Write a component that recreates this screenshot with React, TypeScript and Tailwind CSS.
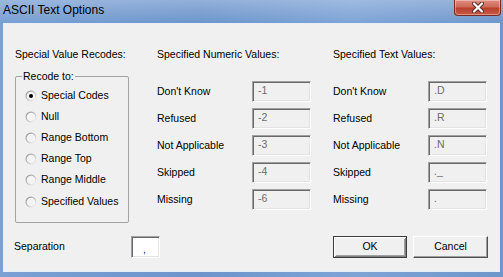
import React from 'react';

const font = { fontFamily: '"Liberation Sans", Arial, sans-serif' };

const recodes = ['Special Codes', 'Null', 'Range Bottom', 'Range Top', 'Range Middle', 'Specified Values'];
const numeric = [
  { label: "Don't Know", value: '-1' },
  { label: 'Refused', value: '-2' },
  { label: 'Not Applicable', value: '-3' },
  { label: 'Skipped', value: '-4' },
  { label: 'Missing', value: '-6' },
];
const text = [
  { label: "Don't Know", value: '.D' },
  { label: 'Refused', value: '.R' },
  { label: 'Not Applicable', value: '.N' },
  { label: 'Skipped', value: '._' },
  { label: 'Missing', value: '.' },
];

const Radio = ({ checked }: { checked?: boolean }) => (
  <svg width="12" height="12" viewBox="0 0 12 12" className="shrink-0">
    <defs>
      <linearGradient id="rb" x1="0" y1="0" x2="1" y2="1">
        <stop offset="0" stopColor="#8a8a8a" />
        <stop offset="0.55" stopColor="#c8c8c8" />
        <stop offset="1" stopColor="#ffffff" />
      </linearGradient>
    </defs>
    <circle cx="6" cy="6" r="5.5" fill="url(#rb)" />
    <circle cx="6" cy="6" r="4.3" fill="#f4f4f4" />
    {checked && <circle cx="6" cy="6" r="2" fill="#000" />}
  </svg>
);

const Field = ({ value }: { value: string }) => (
  <div className="w-[59px] h-[21px] flex items-center pl-[5px] pb-[2px] text-[#6d6d6d] bg-[#f0f0f0] border border-t-[#a0a0a0] border-l-[#a0a0a0] border-r-white border-b-white shadow-[inset_1px_1px_0_#696969,inset_-1px_-1px_0_#e3e3e3]">
    {value}
  </div>
);

const ValueColumn = ({ title, rows }: { title: string; rows: { label: string; value: string }[] }) => (
  <div className="flex flex-col">
    <div className="h-[14px] leading-[14px]">{title}</div>
    <div className="mt-[20px] flex flex-col gap-[6px]">
      {rows.map((r) => (
        <div key={r.label} className="flex items-center h-[21px]">
          <div className="w-[95px]">{r.label}</div>
          <Field value={r.value} />
        </div>
      ))}
    </div>
  </div>
);

export default function App() {
  return (
    <div
      className="w-[503px] h-[277px] flex flex-col overflow-hidden bg-[linear-gradient(90deg,#7aa0d4_0%,#6d95cc_40%,#7ea4d6_70%,#6f96cb_100%)] text-[10.5px] text-black"
      style={font}
    >
      {/* title bar */}
      <div className="h-[23px] flex justify-between shrink-0 bg-[linear-gradient(180deg,rgba(255,255,255,0.25)_0%,rgba(255,255,255,0)_100%)]">
        <div className="pl-[3px] pt-[3px] text-[12px] leading-[15px] text-black">ASCII Text Options</div>
        <div className="mr-[2px] w-[47px] h-[16px] rounded-b-[4px] border border-t-0 border-[#7a2a22] bg-[linear-gradient(180deg,#e08e80_0%,#cf6a5a_45%,#b8402f_55%,#c85a45_100%)] flex items-center justify-center shadow-[inset_0_0_0_1px_rgba(255,255,255,0.35)]">
          <svg width="14" height="11" viewBox="0 0 14 11">
            <path d="M3 1.5 L11 9.5 M11 1.5 L3 9.5" stroke="#5a2a24" strokeWidth="4" strokeLinecap="round" />
            <path d="M3 1.5 L11 9.5 M11 1.5 L3 9.5" stroke="#ffffff" strokeWidth="2.2" strokeLinecap="round" />
          </svg>
        </div>
      </div>

      {/* client area */}
      <div className="ml-[3px] mr-[3px] h-[249px] shrink-0 border border-[#e9eff7] bg-[#f0f0f0] flex flex-col pt-[23px] pl-[11px]">
        <div className="flex">
          {/* recodes */}
          <div className="w-[142px] flex flex-col">
            <div className="h-[14px] leading-[14px]">Special Value Recodes:</div>
            <fieldset className="mt-[8px] w-[114px] h-[154px] border border-[#a3a3a3] rounded-[2px] pl-[9px] pt-[2px]">
              <legend className="-ml-[3px] px-[1px] leading-[14px]">Recode to:</legend>
              {recodes.map((r, i) => (
                <div key={r} className="flex items-center gap-[4px] h-[21.2px]">
                  <Radio checked={i === 0} />
                  <span>{r}</span>
                </div>
              ))}
            </fieldset>
          </div>
          <div className="w-[176px]">
            <ValueColumn title="Specified Numeric Values:" rows={numeric} />
          </div>
          <ValueColumn title="Specified Text Values:" rows={text} />
        </div>

        {/* bottom row */}
        <div className="mt-[13px] flex items-center h-[22px]">
          <div className="w-[117px] -ml-[1px]">Separation</div>
          <div className="w-[29px] h-[22px] pl-[11px] pt-[5px] text-[#1a2a8a] bg-white border border-t-[#a0a0a0] border-l-[#a0a0a0] border-r-white border-b-white shadow-[inset_1px_1px_0_#696969,inset_-1px_-1px_0_#e3e3e3]">
            ,
          </div>
          <div className="ml-[173px] w-[74px] h-[22px] flex items-center justify-center border border-[#3c3c3c] bg-[#f0f0f0] shadow-[inset_1px_1px_0_#ffffff,inset_-1px_-1px_0_#808080,inset_2px_2px_0_#f0f0f0,inset_-2px_-2px_0_#a0a0a0]">
            OK
          </div>
          <div className="ml-[6px] w-[75px] h-[22px] flex items-center justify-center border border-t-white border-l-white border-r-[#505050] border-b-[#505050] bg-[#f0f0f0] shadow-[inset_-1px_-1px_0_#a0a0a0]">
            Cancel
          </div>
        </div>
      </div>
    </div>
  );
}
